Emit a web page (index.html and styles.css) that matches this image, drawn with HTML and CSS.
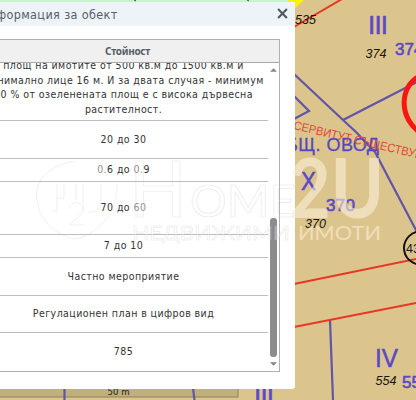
FILE: index.html
```html
<!DOCTYPE html>
<html lang="bg">
<head>
<meta charset="utf-8">
<title>Информация за обект</title>
<link rel="stylesheet" href="styles.css">
</head>
<body>
<main class="viewer">
  <svg class="map" viewBox="0 0 416 400" aria-hidden="true">
    <rect width="416" height="400" fill="#dcc58d"/>
    <path d="M0 0H302L290 9V3H0Z" fill="#c5f3ce"/>
    <path d="M288 0H304L294 9H288Z" fill="#fff200"/>
    <path d="M134 0l2 1M247 0l2 1" stroke="#444"/>
    <rect x="-2" y="380" width="240" height="17" fill="#c0b07d" stroke="#8d815f"/>
    <g class="parcel">
      <path d="M294 74L343 120L356 132L375 152L387 175L417 232"/>
      <path d="M343 120L417 82M294 96L309 111L294 119"/>
      <path d="M330 320L333 400" stroke-width="2.8"/>
      <path d="M64.5 388V400M193 388L194.500 400" stroke-width="2.5"/>
    </g>
    <g class="boundary">
      <path d="M294 27L342 -1M294 284L416 259M294 327L416 303"/>
      <path class="ring" d="M420 76C399 86 398 119 422 134"/>
    </g>
    <circle cx="420.500" cy="248" r="16.500" fill="none" stroke="#111" stroke-width="2"/>
    <g class="roman">
      <text x="368" y="34" textLength="20">III</text>
      <text x="301" y="189.500" textLength="15" lengthAdjust="spacingAndGlyphs">X</text>
      <text x="375" y="367" textLength="23" lengthAdjust="spacingAndGlyphs">IV</text>
      <text x="254" y="404" textLength="20">III</text>
      <text class="parcel-no" x="395" y="54.500">374</text>
      <text class="parcel-no" x="402" y="387.500">554</text>
    </g>
    <text class="owner" x="286" y="151" textLength="93">БЩ. ОВОД</text>
    <text class="note" transform="translate(293 129) rotate(13.200)" textLength="132" lengthAdjust="spacingAndGlyphs">СЕРВИТУТ СЪЩЕСТВУВ</text>
    <g class="small-no">
      <text x="295" y="23.500">535</text>
      <text x="365.500" y="58">374</text>
      <text x="305" y="227.500">370</text>
      <text x="375.500" y="385">554</text>
      <text x="406" y="253" font-style="normal">43</text>
    </g>
    <text class="scale" x="107.500" y="395" textLength="22" lengthAdjust="spacingAndGlyphs">50 m</text>
    <g class="roman">
      <text class="parcel-no" x="326" y="210.500" textLength="29">370</text>
    </g>
  </svg>

  <section class="dialog">
    <header class="dialog-head">
      <h1>Информация за обект</h1>
      <svg class="close" viewBox="0 0 10 10"><path d="M1 1L9 9M9 1L1 9"/></svg>
    </header>
    <div class="table">
      <div class="table-head">Стойност</div>
      <div class="table-body">
        <div class="rows">
          <div class="row row-long"><p>площ на имотите от 500 кв.м до 1500 кв.м и<br>минимално лице 16 м. И за двата случая - минимум<br>50 % от озеленената площ е с висока дървесна<br>растителност.</p></div>
          <div class="row row-mid">20 до 30</div>
          <div class="row row-low"><span><i>0.</i>6 до <i>0.</i>9</span></div>
          <div class="row row-tall"><span>70 до <i>60</i></span></div>
          <div class="row row-low">7 до 10</div>
          <div class="row row-mid">Частно мероприятие</div>
          <div class="row row-mid">Регулационен план в цифров вид</div>
          <div class="row row-last">785</div>
        </div>
        <div class="scrollbar">
          <svg class="arrow" viewBox="0 0 8 4"><path d="M0 4L4 0L8 4Z"/></svg>
          <div class="thumb"></div>
          <svg class="arrow" viewBox="0 0 8 4"><path d="M0 0H8L4 4Z"/></svg>
        </div>
      </div>
    </div>
  </section>

  <svg class="watermark" viewBox="0 0 416 400" aria-hidden="true">
    <g class="emboss">
      <path d="M76 161C55 164 33 177 37 199C39 221 55 235 75 239M117 184C119 211 98 235 75 239"/>
      <path d="M57 184V211H52M64 184V198H58M76 184V200M83 184V211M101 184V205Q99 213 88 212"/>
      <path d="M69 209C71 200 84 201 83 210C82 216 74 219 70 225H84"/>
      <text x="129" y="217" font-size="78" textLength="58" lengthAdjust="spacingAndGlyphs">H</text>
      <text x="190" y="217" font-size="45" textLength="106" lengthAdjust="spacingAndGlyphs">OME</text>
      <text class="tagline" x="132" y="240" font-size="20" textLength="158" lengthAdjust="spacingAndGlyphs">НЕДВИЖИМИ</text>
    </g>
    <g class="shade">
      <text class="mark" x="289" y="218" textLength="95" lengthAdjust="spacingAndGlyphs">2U</text>
      <text x="298" y="240" font-size="20" textLength="83" lengthAdjust="spacingAndGlyphs">ИМОТИ</text>
    </g>
  </svg>
</main>
</body>
</html>
```

FILE: styles.css
```css
body {
  margin: 0;
}

.viewer {
  position: relative;
  width: 416px;
  height: 400px;
  overflow: hidden;
  font-family: "DejaVu Sans Condensed", "DejaVu Sans", sans-serif;
}

.map,
.watermark {
  position: absolute;
  inset: 0;
  width: 416px;
  height: 400px;
}

.map {
  font-family: "Liberation Sans", sans-serif;
}

.parcel path {
  fill: none;
  stroke: #6254a8;
  stroke-width: 2.2;
}

.boundary path {
  fill: none;
  stroke: #e83724;
  stroke-width: 2;
}

.boundary .ring {
  stroke: #fb1512;
  stroke-width: 5;
}

.roman {
  fill: #5a48c8;
  stroke: #5a48c8;
  stroke-width: 0.5;
  font-size: 26px;
}

.roman .parcel-no {
  font-size: 17px;
  stroke-width: 0.6;
}

.owner {
  fill: #5547c0;
  stroke: #5547c0;
  stroke-width: 0.3;
  font-size: 18px;
}

.note {
  fill: #df4838;
  font-size: 12px;
}

.small-no {
  fill: #151515;
  font-size: 12.5px;
  font-style: italic;
}

.scale {
  fill: #39372b;
  font: 9px "DejaVu Sans", sans-serif;
  stroke: #39372b;
  stroke-width: 0.2;
}

.dialog {
  position: relative;
  box-sizing: border-box;
  width: 330px;
  height: 387px;
  margin: 2px 0 0 -35px;
  background: #fff;
  border-radius: 3px;
}

.dialog-head {
  display: flex;
  justify-content: space-between;
  align-items: center;
  height: 24px;
  margin-bottom: 13px;
  padding: 0 7px 0 15px;
  background: #edf3f6;
}

.dialog-head h1 {
  margin: 1px 0 0;
  color: #54616a;
  font-size: 12.5px;
  font-weight: 400;
  letter-spacing: 0.37px;
}

.close {
  width: 11px;
  height: 11px;
  margin-bottom: 2px;
  fill: none;
  stroke: #4d5a61;
  stroke-width: 1.9;
}

.table {
  box-sizing: border-box;
  width: 301px;
  height: 333px;
  margin-left: 14px;
  border: 1px solid #b0b0b0;
}

.table-head {
  height: 22px;
  padding-right: 9px;
  border-bottom: 1px solid #a9a9a9;
  background: #f0f0f0;
  color: #555e65;
  font-family: "Noto Sans", sans-serif;
  font-size: 10px;
  font-weight: 700;
  letter-spacing: -0.3px;
  line-height: 23px;
  text-align: center;
  text-indent: 5px;
}

.table-body {
  display: flex;
  height: 308px;
  overflow: hidden;
}

.rows {
  width: 288px;
  color: #333;
  font-size: 10.5px;
  letter-spacing: 0.43px;
  line-height: 14.5px;
}

.row {
  display: flex;
  align-items: center;
  justify-content: center;
  box-sizing: border-box;
  padding: 0 1px 1px 0;
  border-bottom: 1px solid #bdbdbd;
  text-align: center;
  white-space: nowrap;
}

.row p {
  margin: 0;
}

.row i {
  color: #8f8f8f;
  font-style: normal;
}

.row-long {
  height: 58px;
  align-items: flex-end;
  padding-bottom: 4px;
}

.row-mid {
  height: 37.5px;
}

.row-low {
  height: 23.5px;
}

.row-tall {
  height: 52.5px;
}

.row-last {
  height: 38px;
  border-bottom: 0;
}

.scrollbar {
  display: flex;
  flex-direction: column;
  align-items: center;
  justify-content: space-between;
  width: 11px;
  padding: 5px 0;
}

.arrow {
  width: 7px;
  height: 4px;
  fill: #858585;
}

.thumb {
  width: 7px;
  height: 139px;
  margin: auto 0 5px;
  border-radius: 3px;
  background: #8c8c8c;
}

.emboss {
  fill: none;
  stroke: #bbb;
  stroke-width: 0.6;
  opacity: 0.35;
  font-family: Lato, sans-serif;
}

.emboss .tagline {
  fill: #fff;
  stroke-width: 0.5;
}

.shade {
  fill: #fbf0d8;
  opacity: 0.6;
  font-family: Lato, sans-serif;
}

.shade .mark {
  font-size: 83px;
  font-weight: 700;
}
```
